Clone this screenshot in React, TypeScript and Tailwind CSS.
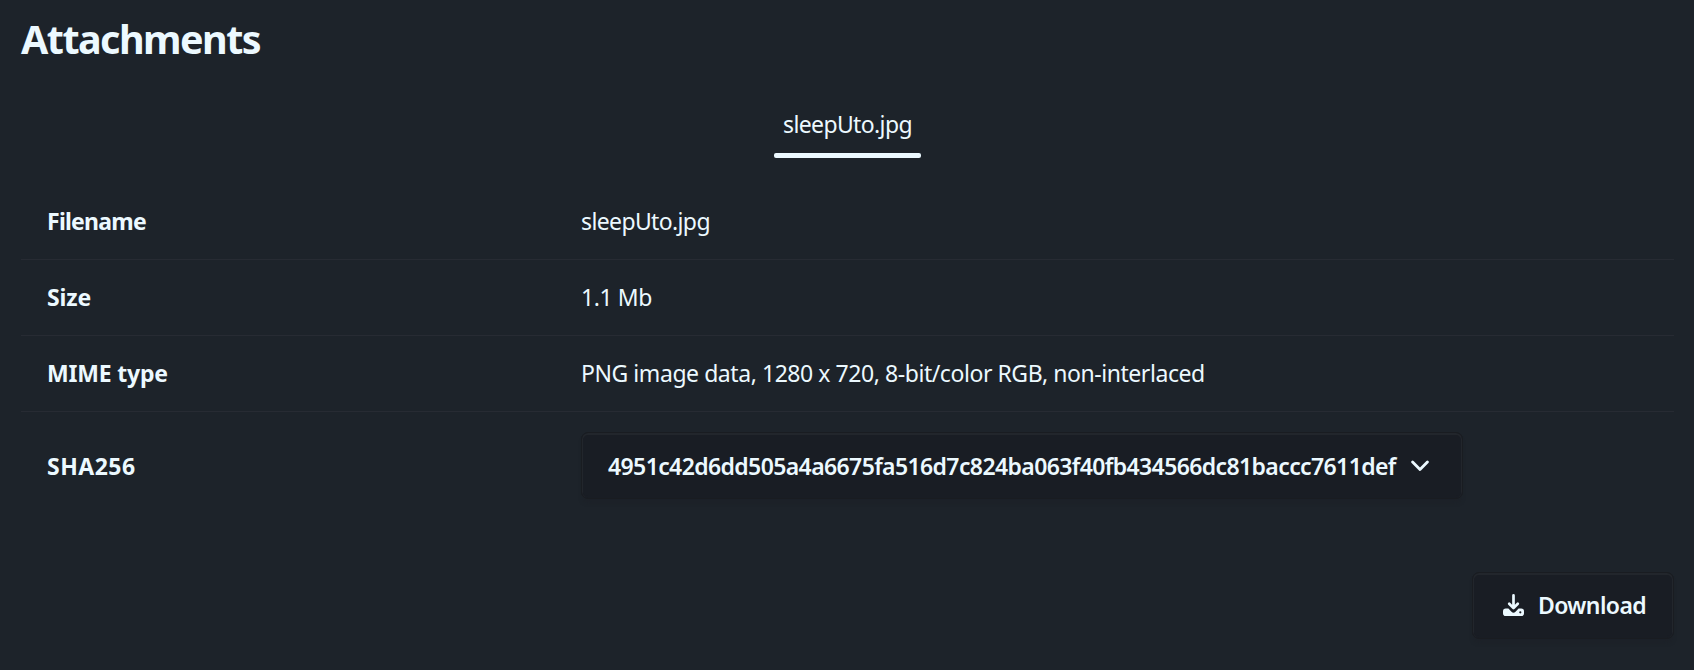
import type { ReactNode } from "react";

const HASH = "4951c42d6dd505a4a6675fa516d7c824ba063f40fb434566dc81baccc7611def";

function Row({ label, children, last }: { label: ReactNode; children: ReactNode; last?: boolean }) {
  return (
    <div
      className={
        last
          ? "flex h-[107px] items-center"
          : "flex h-[76px] items-center border-b border-[#272b33] pb-px"
      }
    >
      <div className="w-[560px] shrink-0 pl-[26px] font-bold">{label}</div>
      <div>{children}</div>
    </div>
  );
}

function ChevronIcon() {
  return (
    <svg className="h-[12px] w-[18px]" viewBox="0 0 18 12" fill="none">
      <path
        d="M1.6 1.9L9 9.400l7.400-7.500"
        stroke="currentColor"
        strokeWidth="2.8"
        strokeLinecap="round"
        strokeLinejoin="round"
      />
    </svg>
  );
}

function DownloadIcon() {
  return (
    <svg className="h-[22px] w-[21px]" viewBox="0 0 21 22" fill="none">
      <path
        d="M10.5 1.4v12.4M6.2 9.700l4.300 4.400 4.300-4.400"
        stroke="currentColor"
        strokeWidth="2.7"
        strokeLinecap="round"
        strokeLinejoin="round"
      />
      <path
        fill="currentColor"
        fillRule="evenodd"
        d="M2.8 14.6h2.6l3.100 3.100a2.800 2.800 0 0 0 4 0l3.100-3.100h2.600A2.800 2.800 0 0 1 21 17.400v1.800A2.800 2.800 0 0 1 18.200 22H2.800A2.800 2.800 0 0 1 0 19.200v-1.800A2.800 2.800 0 0 1 2.800 14.600zM17.300 17.200a1.100 1.100 0 1 0 0 2.200a1.100 1.100 0 0 0 0-2.200z"
      />
    </svg>
  );
}

const BUTTON =
  "flex h-[67px] items-center rounded-[7px] border border-[#191c21] bg-[#191d24] font-semibold shadow-[inset_0_1px_0_1px_#22262c,inset_0_-2px_0_#191d24,0_5px_4px_-2px_#1c1f2799]";

export default function App() {
  return (
    <main className="flex h-[670px] flex-col bg-[#1d232a] pr-[20px] pl-[21px] font-['Noto_Sans',sans-serif] text-[23px] leading-8 text-[#ecf9ff]">
      <h1 className="pt-[15px] text-[39.500px] leading-[48px] font-bold tracking-[-1.55px]">
        <span>Attachments</span>
      </h1>
      <div className="mt-[45px] flex justify-center">
        <div className="flex w-[147px] flex-col items-center">
          <span className="h-[45px] tracking-[-0.63px]">sleepUto.jpg</span>
          <div className="h-[5px] w-full rounded-[2px] bg-[#ecf9ff]" />
        </div>
      </div>
      <section className="mt-[26px]">
        <Row label={<span className="tracking-[-0.75px]">Filename</span>}>
          <span className="tracking-[-0.63px]">sleepUto.jpg</span>
        </Row>
        <Row label={<span className="tracking-[-0.1px]">Size</span>}>
          <span className="tracking-[-0.4px]">1.1 Mb</span>
        </Row>
        <Row label={<span className="tracking-[-0.2px]">MIME type</span>}>
          <span className="tracking-[-0.440px]">
            PNG image data, 1280 x 720, 8-bit/color RGB, non-interlaced
          </span>
        </Row>
        <Row label={<span className="tracking-[0.5px]">SHA256</span>} last>
          <button className={`${BUTTON} w-[882px] justify-between pr-[33px] pl-[26px]`}>
            <span className="tracking-[-0.61px]">{HASH}</span>
            <ChevronIcon />
          </button>
        </Row>
      </section>
      <div className="mt-[53px] flex justify-end">
        <button className={`${BUTTON} w-[202px] gap-[14px] pb-px pl-[30px]`}>
          <DownloadIcon />
          <span className="tracking-[-0.6px]">Download</span>
        </button>
      </div>
    </main>
  );
}
